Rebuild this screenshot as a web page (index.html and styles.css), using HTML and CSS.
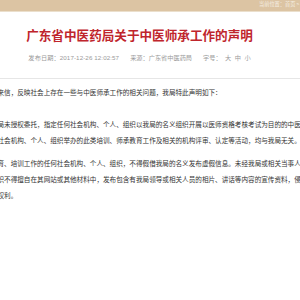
FILE: index.html
```html
<!DOCTYPE html>
<html lang="zh-CN">
<head>
<meta charset="utf-8">
<title>广东省中医药局关于中医师承工作的声明</title>
<link rel="stylesheet" href="styles.css">
</head>
<body>
<div class="topbar">
  <div class="crumb">当前位置：首页 &gt; 通知公告</div>
</div>
<div class="head">
  <h1 class="title">广东省中医药局关于中医师承工作的声明</h1>
  <div class="meta">
    <span class="m-date">发布日期：2017-12-26 12:02:57</span>
    <span class="m-src">来源：广东省中医药局</span>
    <span class="m-size">字号：<span class="sz">大</span><span class="sz">中</span><span class="sz">小</span></span>
  </div>
</div>
<div class="divider"></div>
<div class="article">
  <p class="p1">来信，反映社会上存在一些与中医师承工作的相关问题，我局特此声明如下：</p>
  <p class="p2">局未授权委托，指定任何社会机构、个人、组织以我局的名义组织开展以医师资格考核考试为目的的中医师承培训。<br>社会机构、个人、组织举办的此类培训、师承教育工作及相关的机构评审、认定等活动，均与我局无关。</p>
  <p class="p3">育、培训工作的任何社会机构、个人、组织，不得假借我局的名义发布虚假信息。未经我局或相关当事人同意，<br>织不得擅自在其网站或其他材料中，发布包含有我局领导或相关人员的相片、讲话等内容的宣传资料，侵犯他人<br>权利。</p>
</div>
</body>
</html>
```

FILE: styles.css
```css
html, body {
  margin: 0;
  padding: 0;
  background: #ffffff;
  overflow: hidden;
}

body {
  width: 300px;
  font-family: "Noto Sans CJK SC", "Liberation Sans", sans-serif;
}

.topbar {
  height: 11px;
  background: #dcc4a3;
  border-bottom: 1px solid #ebdfcc;
  display: flex;
  justify-content: flex-start;
  overflow: hidden;
}

.crumb {
  margin-left: 259px;
  margin-top: 1px;
  font-size: 5.2px;
  line-height: 6px;
  color: #f6efe4;
  white-space: nowrap;
}

.head {
  width: 279px;
  text-align: center;
  padding-top: 15px;
}

.title {
  margin: 0;
  font-size: 12.6px;
  line-height: 16px;
  font-weight: 700;
  color: #bf252c;
  white-space: nowrap;
}

.meta {
  margin-top: 9.5px;
  font-family: "Liberation Sans", "Noto Sans CJK SC", sans-serif;
  font-size: 6.2px;
  line-height: 10px;
  color: #9a9a9a;
  white-space: nowrap;
  display: flex;
  justify-content: center;
  gap: 11px;
}

.m-date {
  letter-spacing: 0.1px;
}

.sz {
  margin-left: 3.5px;
}

.divider {
  margin-top: 15.5px;
  height: 1px;
  background: #e6e6e6;
}

.article {
  margin-left: -2.5px;
  width: 420px;
  padding-top: 5px;
  font-size: 6.6px;
  line-height: 16px;
  color: #333333;
  white-space: nowrap;
}

.article p {
  margin: 0;
}

.article .p2 {
  margin-top: 16px;
}

.article .p3 {
  margin-top: 7px;
}
```
